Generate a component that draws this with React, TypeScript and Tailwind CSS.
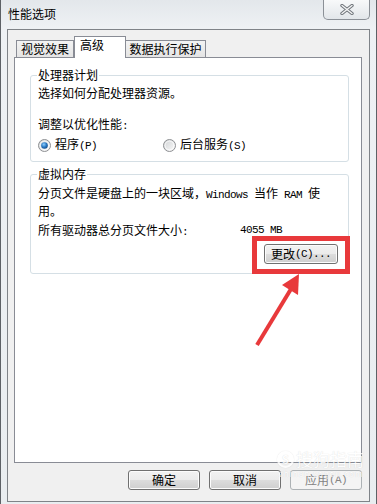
import React from 'react';

// Latin runs: SimSun-like half-width (6px advance)
const L: React.FC<{ children: React.ReactNode }> = ({ children }) => (
  <span className="font-['Liberation_Mono',monospace] text-[11px] tracking-[-0.6px]">{children}</span>
);

const Radio: React.FC<{ checked?: boolean }> = ({ checked }) => (
  <svg width="13" height="13" viewBox="0 0 13 13" className="shrink-0">
    <defs>
      <linearGradient id="radioFill" x1="0" y1="0" x2="1" y2="1">
        <stop offset="0" stopColor="#cfd2d4" />
        <stop offset="1" stopColor="#fbfbfb" />
      </linearGradient>
      <radialGradient id="radioDot" cx="0.4" cy="0.35" r="0.7">
        <stop offset="0" stopColor="#8fd0ff" />
        <stop offset="0.55" stopColor="#2a79c4" />
        <stop offset="1" stopColor="#134a86" />
      </radialGradient>
    </defs>
    <circle cx="6.5" cy="6.5" r="6" fill="url(#radioFill)" stroke="#8e9093" />
    <circle cx="6.5" cy="6.5" r="4.4" fill="none" stroke="#ffffff" strokeOpacity="0.7" />
    {checked && <circle cx="6.5" cy="6.5" r="3.3" fill="url(#radioDot)" />}
  </svg>
);

const Btn: React.FC<{ children: React.ReactNode; disabled?: boolean; className?: string }> = ({ children, disabled, className }) => (
  <button
    type="button"
    className={`flex h-[20px] w-[72px] items-center justify-center rounded-[3px] border leading-[14px] ${
      disabled
        ? 'border-[#adb2b5] bg-[#f4f4f4] text-[#838383]'
        : 'border-[#707070] bg-[linear-gradient(#f2f2f2,#ebebeb_50%,#dddddd_50%,#cfcfcf)] shadow-[inset_0_0_0_1px_#fcfcfc]'
    } ${className || ''}`}
  >
    {children}
  </button>
);

export default function App() {
  return (
    <div className="relative h-[504px] w-[377px] overflow-hidden border-x border-[#5d6166] bg-[linear-gradient(180deg,#e3e7eb_0px,#eef1f4_28px,#e9edf0_100%)] font-['Noto_Sans_CJK_SC',sans-serif] text-[12px] leading-[14px] text-black">
      {/* title bar */}
      <div className="flex h-[29px] items-start justify-between">
        <div className="pl-[7px] pt-[7px]">性能选项</div>
        <button
          type="button"
          className="mr-[6px] flex h-[20px] w-[47px] items-center justify-center rounded-b-[5px] border border-t-0 border-[#8b9097] bg-[linear-gradient(#f8f9fa,#e2e6ea)]"
        >
          <svg width="14" height="11" viewBox="0 0 14 11">
            <path d="M2 1.5 L12 9.5 M12 1.5 L2 9.5" stroke="#6f747a" strokeWidth="3.4" strokeLinecap="round" />
            <path d="M2 1.5 L12 9.5 M12 1.5 L2 9.5" stroke="#f4f5f6" strokeWidth="1.4" strokeLinecap="round" />
          </svg>
        </button>
      </div>

      {/* client area */}
      <div className="ml-[6px] h-[473px] w-[363px] border border-[#7f8388] bg-[#f0f0f0] pl-[6px] pt-[6px]">
        {/* tabs */}
        <div className="flex h-[21px] items-end pl-[2px]">
          <div className="flex h-[17px] w-[58px] items-center justify-center border border-b-0 border-[#898c95] bg-[linear-gradient(#f3f3f3,#e4e4e4)]">
            视觉效果
          </div>
          <div className="relative z-10 -mb-px flex h-[22px] w-[52px] items-start border border-b-0 border-[#898c95] bg-white pl-[5px] pt-[1px]">
            高级
          </div>
          <div className="flex h-[17px] w-[80px] items-center justify-center border border-b-0 border-l-0 border-[#898c95] bg-[linear-gradient(#f3f3f3,#e4e4e4)]">
            数据执行保护
          </div>
        </div>

        {/* panel */}
        <div className="h-[406px] w-[348px] border border-[#898c95] bg-white pl-[15px]">
          <fieldset className="mt-[10px] w-[319px] rounded-[3px] border border-[#d5dfe5] px-[7px] pb-[8px]">
            <legend className="-ml-[1px] px-[1px]">处理器计划</legend>
            <div className="mt-[4px]">选择如何分配处理器资源。</div>
            <div className="mt-[17px]">
              调整以优化性能<L>:</L>
            </div>
            <div className="mt-[4px] flex items-center">
              <div className="flex w-[125px] items-center gap-[4px]">
                <Radio checked />
                <span>
                  程序<L>(P)</L>
                </span>
              </div>
              <div className="flex items-center gap-[4px]">
                <Radio />
                <span>
                  后台服务<L>(S)</L>
                </span>
              </div>
            </div>
          </fieldset>

          <fieldset className="mt-[5px] w-[319px] rounded-[3px] border border-[#d5dfe5] px-[7px] pb-[9px]">
            <legend className="-ml-[1px] px-[1px]">虚拟内存</legend>
            <div className="mt-[4px] whitespace-nowrap leading-[15px]">
              分页文件是硬盘上的一块区域，<L>Windows </L>当作<L> RAM </L>使
              <br />
              用。
            </div>
            <div className="mt-[5px] flex">
              <div className="w-[202px]">
                所有驱动器总分页文件大小<L>:</L>
              </div>
              <L>4055 MB</L>
            </div>
            <div className="mt-[5px] flex justify-end pr-[3px]">
              <Btn className="h-[19px] w-[74px]">
                更改<L>(C)...</L>
              </Btn>
            </div>
          </fieldset>
        </div>

        {/* dialog buttons */}
        <div className="mt-[7px] flex w-[348px] justify-end gap-[9px]">
          <Btn>确定</Btn>
          <Btn>取消</Btn>
          <Btn disabled>
            应用<L>(A)</L>
          </Btn>
        </div>
      </div>

      {/* annotation: red box + arrow */}
      <svg className="pointer-events-none absolute left-[-1px] top-0" width="377" height="504" viewBox="0 0 377 504">
        <rect x="254.5" y="238.5" width="93" height="33" fill="none" stroke="#e8393b" strokeWidth="5" />
        <line x1="257" y1="345" x2="291" y2="289" stroke="#e8393b" strokeWidth="4" />
        <polygon points="299,274 298,295 282,285" fill="#e8393b" />
      </svg>

      {/* watermark */}
      <div className="pointer-events-none absolute left-[276px] top-[449px] flex flex-col items-start text-white opacity-80 [text-shadow:0_0_1px_rgba(0,0,0,0.18)]">
        <div className="flex items-center gap-[2px]">
          <span className="flex h-[17px] w-[17px] items-center justify-center rounded-full border-2 border-white text-[11px] font-bold leading-none shadow-[0_0_1px_rgba(0,0,0,0.2)]">
            S
          </span>
          <span className="text-[17px] leading-[20px]">搜狗指南</span>
        </div>
        <span className="pl-[2px] text-[8px] leading-[10px] tracking-[1px]">zhinan.sogou.com</span>
      </div>
    </div>
  );
}
